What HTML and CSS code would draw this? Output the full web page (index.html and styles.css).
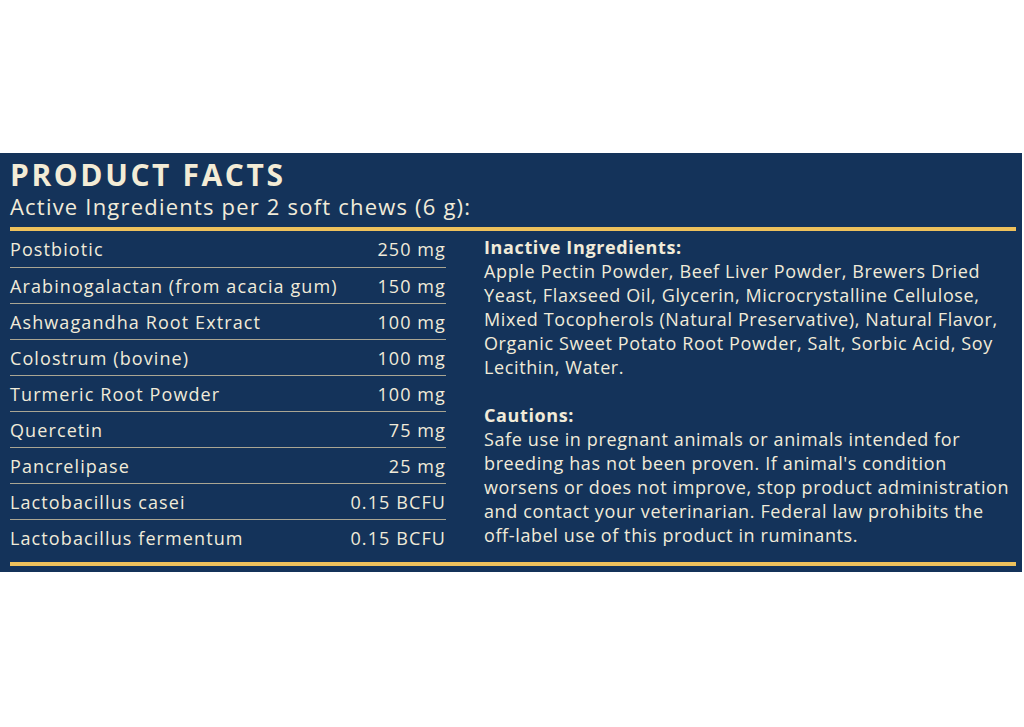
FILE: index.html
```html
<!DOCTYPE html>
<html lang="en">
<head>
<meta charset="utf-8">
<title>Product Facts</title>
<link rel="stylesheet" href="styles.css">
</head>
<body>
<section class="panel">
  <h1 class="title">PRODUCT FACTS</h1>
  <p class="subtitle">Active Ingredients per 2 soft chews (6 g):</p>
  <div class="rule"></div>
  <div class="content">
    <div class="facts">
      <div class="row"><span>Postbiotic</span><span>250 mg</span></div>
      <div class="row"><span>Arabinogalactan (from acacia gum)</span><span>150 mg</span></div>
      <div class="row"><span>Ashwagandha Root Extract</span><span>100 mg</span></div>
      <div class="row"><span>Colostrum (bovine)</span><span>100 mg</span></div>
      <div class="row"><span>Turmeric Root Powder</span><span>100 mg</span></div>
      <div class="row"><span>Quercetin</span><span>75 mg</span></div>
      <div class="row"><span>Pancrelipase</span><span>25 mg</span></div>
      <div class="row"><span>Lactobacillus casei</span><span>0.15 BCFU</span></div>
      <div class="row"><span>Lactobacillus fermentum</span><span>0.15 BCFU</span></div>
    </div>
    <div class="notes">
      <h2 class="note-head">Inactive Ingredients:</h2>
      <p class="note-text">Apple Pectin Powder, Beef Liver Powder, Brewers Dried Yeast, Flaxseed Oil, Glycerin, Microcrystalline Cellulose, Mixed Tocopherols (Natural Preservative), Natural Flavor, Organic Sweet Potato Root Powder, Salt, Sorbic Acid, Soy Lecithin, Water.</p>
      <h2 class="note-head note-gap">Cautions:</h2>
      <p class="note-text">Safe use in pregnant animals or animals intended for breeding has not been proven. If animal's condition worsens or does not improve, stop product administration and contact your veterinarian. Federal law prohibits the off-label use of this product in ruminants.</p>
    </div>
  </div>
  <div class="rule rule-bottom"></div>
</section>
</body>
</html>
```

FILE: styles.css
```css
html, body {
  margin: 0;
  padding: 0;
  background: #ffffff;
}

body {
  font-family: "Open Sans", Lato, sans-serif;
  color: #f1ebd9;
}

.panel {
  margin-top: 153px;
  width: 1022px;
  height: 419px;
  box-sizing: border-box;
  background: #14335a;
  padding: 4px 6px 0 10px;
  display: flex;
  flex-direction: column;
}

.title {
  margin: 0;
  font-size: 30px;
  line-height: 36px;
  font-weight: 700;
  letter-spacing: 2.6px;
  color: #f3ecd6;
}

.subtitle {
  margin: 0;
  font-size: 22px;
  line-height: 27px;
  letter-spacing: 1.2px;
}

.rule {
  height: 4px;
  background: #eec15c;
  margin-top: 7px;
}

.content {
  display: flex;
  gap: 38px;
  height: 326px;
}

.facts {
  width: 436px;
  flex: none;
  display: flex;
  flex-direction: column;
}

.row {
  display: flex;
  justify-content: space-between;
  align-items: center;
  height: 36px;
  font-size: 18px;
  letter-spacing: 1.1px;
  border-top: 1.5px solid #aaa693;
  box-sizing: border-box;
}

.row:first-child {
  border-top: none;
}

.notes {
  flex: 1;
  padding-top: 4px;
  font-size: 18px;
  line-height: 24px;
  letter-spacing: 0.62px;
}

.note-head {
  margin: 0;
  font-size: 18px;
  font-weight: 700;
  line-height: 24px;
}

.note-gap {
  margin-top: 24px;
}

.note-text {
  margin: 0;
}

.rule-bottom {
  margin-top: 5px;
}
```
